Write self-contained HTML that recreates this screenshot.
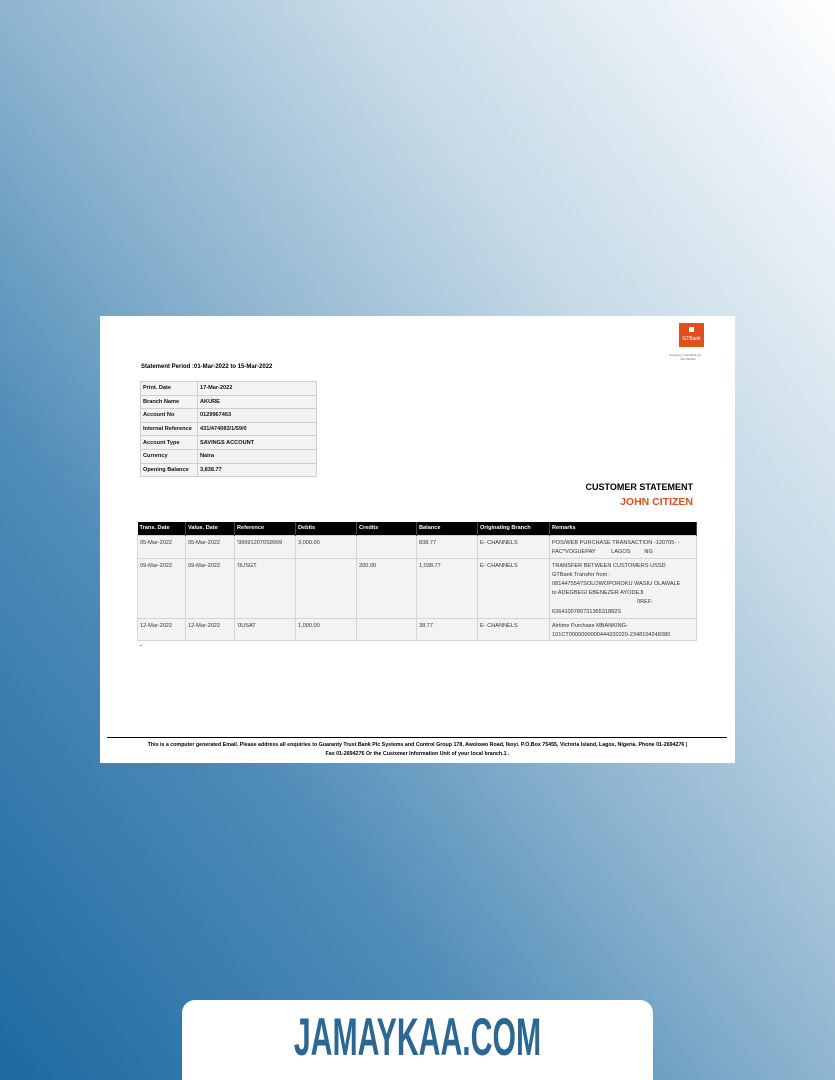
<!DOCTYPE html>
<html style="width:835px;height:1080px;overflow:hidden;background:#1d6aa0"><head><meta charset="utf-8"><style>
*{margin:0;padding:0;box-sizing:border-box}
body{width:835px;height:1080px;overflow:hidden;position:relative;font-family:"Liberation Sans",Arial,sans-serif;
background:linear-gradient(to top right,#1d6aa0 0%,#4f8cb8 30%,#8fb5cf 50%,#c5d9e7 70%,#ffffff 100%);}
.doc{position:absolute;left:100px;top:316px;width:635px;height:447px;background:#fff}
.a{position:absolute;white-space:nowrap}
.logo{position:absolute;left:579px;top:7px;width:25px;height:24px;background:#e0501b;color:#fff;font-size:5px;text-align:center}
.logo i{position:absolute;left:10px;top:4px;width:5px;height:5px;background:#fff}
.logo span{position:absolute;left:0;right:0;top:13px}
table{border-collapse:collapse;position:absolute}
.info{left:40px;top:65px;width:177px;font-size:5.6px;font-weight:bold;background:#f3f3f3}
.info td{border:1px solid #cfcfcf;height:13.6px;padding:0 2px;color:#111;white-space:nowrap}
.info td:first-child{width:57px}
.tx{left:37px;top:206px;width:560px;font-size:5.6px;color:#333;background:#f3f3f3}
.tx th{background:#000;color:#fff;text-align:left;font-weight:bold;height:13px;padding:0 2px;border-right:1px solid #444}
.tx td{vertical-align:top;padding:3px 2px 0;border:1px solid #d5d5d5;line-height:9.2px}
</style></head><body>
<div class="doc">
<div class="logo"><i></i><span>GTBank</span></div>
<div class="a" style="left:569px;top:37px;font-size:3px;color:#666">Guaranty Trust Bank plc<br>&nbsp;&nbsp;&nbsp;&nbsp;&nbsp;&nbsp;&nbsp;&nbsp;&nbsp;&nbsp;&nbsp;&nbsp;&nbsp;&nbsp;RC 152321</div>
<div class="a" style="left:41px;top:48px;font-size:6px;font-weight:bold">Statement Period :01-Mar-2022 to 15-Mar-2022</div>
<table class="info">
<tr><td>Print. Date</td><td>17-Mar-2022</td></tr>
<tr><td>Branch Name</td><td>AKURE</td></tr>
<tr><td>Account No</td><td>0129967463</td></tr>
<tr><td>Internal Reference</td><td>431/474083/1/59/0</td></tr>
<tr><td>Account Type</td><td>SAVINGS ACCOUNT</td></tr>
<tr><td>Currency</td><td>Naira</td></tr>
<tr><td>Opening Balance</td><td>3,838.77</td></tr>
</table>
<div class="a" style="right:42px;top:166px;font-size:9px;font-weight:bold">CUSTOMER STATEMENT</div>
<div class="a" style="right:42px;top:180px;font-size:10.5px;font-weight:bold;color:#e0501b">JOHN CITIZEN</div>
<table class="tx">
<tr><th style="width:48px">Trans. Date</th><th style="width:49px">Value. Date</th><th style="width:61px">Reference</th><th style="width:61px">Debits</th><th style="width:60px">Credits</th><th style="width:61px">Balance</th><th style="width:72px">Originating Branch</th><th>Remarks</th></tr>
<tr style="height:23px"><td>05-Mar-2022</td><td>05-Mar-2022</td><td>'999912070S9999</td><td>3,000.00</td><td></td><td>838.77</td><td>E- CHANNELS</td><td>POS/WEB PURCHASE TRANSACTION -120705- -<br>FAC*VOGUEPAY&nbsp;&nbsp;&nbsp;&nbsp;&nbsp;&nbsp;&nbsp;&nbsp;&nbsp;&nbsp;LAGOS&nbsp;&nbsp;&nbsp;&nbsp;&nbsp;&nbsp;&nbsp;&nbsp;&nbsp;NG</td></tr>
<tr style="height:60px"><td>09-Mar-2022</td><td>09-Mar-2022</td><td>'0USGT</td><td></td><td>200.00</td><td>1,038.77</td><td>E- CHANNELS</td><td>TRANSFER BETWEEN CUSTOMERS USSD<br>GTBank Transfer from :<br>0814475547SOLOWOPOROKU WASIU OLAWALE<br>to ADEGBEGI EBENEZER AYODEJI<br><span style="padding-left:85px">0REF:</span><br>636410078073136531882S</td></tr>
<tr style="height:22px"><td>12-Mar-2022</td><td>12-Mar-2022</td><td>'0USAT</td><td>1,000.00</td><td></td><td>38.77</td><td>E- CHANNELS</td><td>Airtime Purchase MBANKING-<br>101CT0000000000444320220-2348104248380</td></tr>
</table>
<div class="a" style="left:40px;top:327px;font-size:6px">-</div>
<div style="position:absolute;left:7px;right:8px;top:421px;border-top:1px solid #000"></div>
<div class="a" style="left:0;right:0;top:425px;text-align:center;font-size:5.3px;font-weight:bold;line-height:9px">This is a computer generated Email. Please address all enquiries to Guaranty Trust Bank Plc Systems and Control Group 178, Awolowo Road, Ikoyi. P.O.Box 75455, Victoria Island, Lagos, Nigeria. Phone 01-2694276 |<br>Fax 01-2694276 Or the Customer Information Unit of your local branch.1 .</div>
</div>
<div style="position:absolute;left:182px;top:1000px;width:471px;height:80px;background:#fff;border-radius:13px 13px 0 0"></div>
<div class="a" style="left:182px;width:471px;top:1008px;text-align:center;font-size:53px;font-weight:bold;color:#2c6791;transform:scaleX(0.57);line-height:60px">JAMAYKAA.COM</div>
</body></html>
